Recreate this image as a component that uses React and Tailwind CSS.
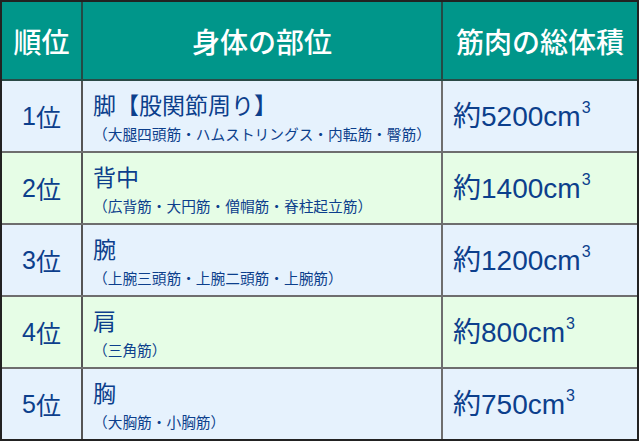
const rows = [
  { rank: "1", title: "脚【股関節周り】", sub: "（大腿四頭筋・ハムストリングス・内転筋・臀筋）", vol: "約5200cm", bg: "bg-[#e6f2fd]" },
  { rank: "2", title: "背中", sub: "（広背筋・大円筋・僧帽筋・脊柱起立筋）", vol: "約1400cm", bg: "bg-[#e6fde6]" },
  { rank: "3", title: "腕", sub: "（上腕三頭筋・上腕二頭筋・上腕筋）", vol: "約1200cm", bg: "bg-[#e6f2fd]" },
  { rank: "4", title: "肩", sub: "（三角筋）", vol: "約800cm", bg: "bg-[#e6fde6]" },
  { rank: "5", title: "胸", sub: "（大胸筋・小胸筋）", vol: "約750cm", bg: "bg-[#e6f2fd]" },
];

export default function App() {
  return (
    <div className="w-[640px] h-[441px] bg-white font-['Liberation_Sans','Noto_Sans_CJK_JP',sans-serif]">
      <div className="w-[639px] h-[441px] border-2 border-[#222] flex flex-col">
        <div className="h-[79px] flex bg-[#00968a] text-white border-b-2 border-[#2a4a46] text-[28px] font-medium font-['Noto_Sans_CJK_JP',sans-serif]">
          <div className="w-[81px] border-r-2 border-[#244a45] flex items-center justify-center">順位</div>
          <div className="w-[360px] border-r-2 border-[#244a45] flex items-center justify-center">身体の部位</div>
          <div className="flex-1 flex items-center justify-center">筋肉の総体積</div>
        </div>
        {rows.map((r, i) => (
          <div
            key={i}
            className={
              i < 4
                ? `flex text-[#0c3f8c] ${r.bg} h-[72px] border-b-2 border-[#6e6e6e]`
                : `flex text-[#0c3f8c] ${r.bg} flex-1`
            }
          >
            <div className="w-[81px] border-r-2 border-[#555] flex items-center justify-center text-[25px] pt-[2px]">
              <span>{r.rank}</span>
              <span className="font-['Noto_Sans_CJK_JP',sans-serif]">位</span>
            </div>
            <div className="w-[360px] border-r-2 border-[#6e6e6e] pl-[10px] pt-[7px] flex flex-col font-['Noto_Sans_CJK_JP',sans-serif]">
              <div className="text-[23px] leading-[32px] h-[32px]">{r.title}</div>
              <div className="text-[14.7px] leading-[20px] mt-[4px]">{r.sub}</div>
            </div>
            <div className="flex-1 flex items-center pl-[10px] text-[28px] pt-[2px]">
              <span>{r.vol}</span>
              <span className="text-[16px] leading-none relative -top-[9px] ml-[1px]">3</span>
            </div>
          </div>
        ))}
      </div>
    </div>
  );
}
